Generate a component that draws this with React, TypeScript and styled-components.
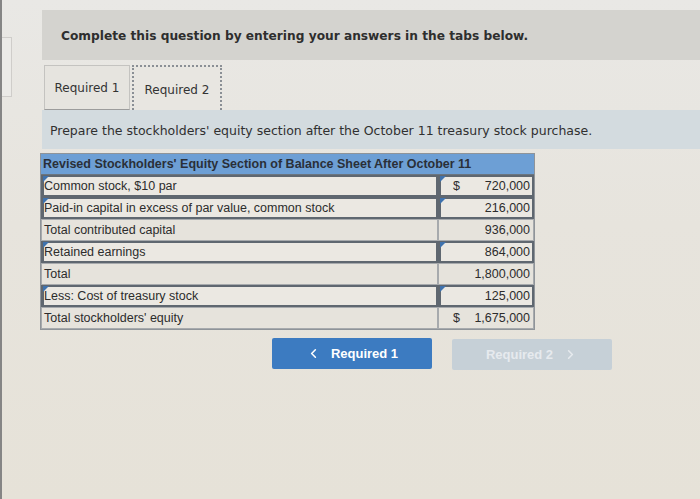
import React from "react";
import styled, { createGlobalStyle } from "styled-components";
import { ChevronLeft, ChevronRight } from "lucide-react";

const Global = createGlobalStyle`
  html, body { margin: 0; padding: 0; }
  body {
    width: 700px;
    height: 499px;
    overflow: hidden;
    background: linear-gradient(180deg, #e9e8e5 0%, #e7e4dd 45%, #e6e2d8 100%);
    font-family: "DejaVu Sans", Verdana, sans-serif;
    color: #2f2f2f;
  }
`;

const Page = styled.div`
  display: flex;
  height: 499px;
`;

const Rail = styled.div`
  width: 12px;
  flex: none;
  border-left: 2px solid #858585;
  padding-top: 37px;
  box-sizing: border-box;
`;

const RailBox = styled.div`
  height: 58px;
  border: 1px solid #cfcdca;
  border-left: none;
  background: #ebeae7;
`;

const Main = styled.div`
  flex: 1;
  padding-left: 30px;
  padding-top: 10px;
  display: flex;
  flex-direction: column;
`;

const Band = styled.div`
  height: 50px;
  background: #d4d3cf;
  display: flex;
  align-items: center;
  padding-left: 19px;
  padding-top: 1px;
  box-sizing: border-box;
  font-weight: bold;
  font-size: 12.2px;
  color: #2e2e2e;
`;

const TabStrip = styled.div`
  margin-top: 5px;
  height: 45px;
  display: flex;
  align-items: stretch;
  gap: 2px;
  padding-left: 2px;
`;

const Tab = styled.div<{ $active?: boolean }>`
  width: ${(p) => (p.$active ? "90px" : "86px")};
  box-sizing: border-box;
  display: flex;
  align-items: center;
  justify-content: center;
  font-size: 12px;
  color: #333;
  background: ${(p) => (p.$active ? "#e8e6e1" : "#e6e4df")};
  border: ${(p) => (p.$active ? "2px dotted #8a8f95" : "1px solid #c4c3c0")};
  border-bottom: ${(p) => (p.$active ? "2px dotted #8a8f95" : "1px solid #9c9c9c")};
  margin-bottom: ${(p) => (p.$active ? "-3px" : "0")};
  padding-top: ${(p) => (p.$active ? "2px" : "0")};
`;

const Panel = styled.div`
  height: 39px;
  background: #d3dbdf;
  display: flex;
  align-items: center;
  padding-left: 8px;
  padding-top: 2px;
  box-sizing: border-box;
  font-size: 12.5px;
  color: #303030;
`;

const Table = styled.div`
  margin-top: 4px;
  margin-left: -2px;
  width: 493px;
  display: grid;
  grid-template-columns: 397px 96px;
  font-family: "Liberation Sans", Arial, sans-serif;
  font-size: 12.5px;
  color: #2c2c2c;
  border: 1px solid #8f9499;
  background: #e7e4dd;
`;

const Head = styled.div`
  grid-column: 1 / span 2;
  height: 20px;
  background: #6d9fd5;
  display: flex;
  align-items: center;
  padding-left: 2px;
  font-weight: bold;
  color: #2a2f38;
  border-bottom: 1px solid #6a7580;
`;

const Cell = styled.div<{ $input?: boolean; $amount?: boolean }>`
  position: relative;
  height: 22px;
  box-sizing: border-box;
  display: flex;
  align-items: center;
  padding: ${(p) => (p.$input ? "0 2px 0 0" : "0 3px 0 2px")};
  justify-content: ${(p) => (p.$amount ? "space-between" : "flex-start")};
  background: ${(p) => (p.$input ? "#ebe8e2" : "#e6e3dc")};
  border: ${(p) => (p.$input ? "2px solid #5f6770" : "1px solid #a7aaad")};
  border-left-width: ${(p) => (p.$input ? "3px" : "1px")};
  &::before {
    content: "";
    display: ${(p) => (p.$input ? "block" : "none")};
    position: absolute;
    left: -1px;
    top: -1px;
    border-top: 6px solid #3f72ad;
    border-right: 6px solid transparent;
  }
`;

const Dollar = styled.span`
  padding-left: 12px;
`;

const Num = styled.span`
  margin-left: auto;
`;

const Buttons = styled.div`
  margin-top: 8px;
  display: flex;
  gap: 20px;
  padding-left: 230px;
`;

const NavButton = styled.div<{ $disabled?: boolean }>`
  width: 160px;
  height: 31px;
  box-sizing: border-box;
  border-radius: 2px;
  display: flex;
  align-items: center;
  justify-content: center;
  gap: 10px;
  font-family: "Liberation Sans", Arial, sans-serif;
  font-weight: bold;
  font-size: 13px;
  background: ${(p) => (p.$disabled ? "#c6d0d7" : "#3c7bc1")};
  color: ${(p) => (p.$disabled ? "#e6eaee" : "#ffffff")};
  margin-top: ${(p) => (p.$disabled ? "1px" : "0")};
`;

type Row = { label: string; input: boolean; dollar?: boolean; value: string };

const rows: Row[] = [
  { label: "Common stock, $10 par", input: true, dollar: true, value: "720,000" },
  { label: "Paid-in capital in excess of par value, common stock", input: true, value: "216,000" },
  { label: "Total contributed capital", input: false, value: "936,000" },
  { label: "Retained earnings", input: true, value: "864,000" },
  { label: "Total", input: false, value: "1,800,000" },
  { label: "Less: Cost of treasury stock", input: true, value: "125,000" },
  { label: "Total stockholders' equity", input: false, dollar: true, value: "1,675,000" },
];

export default function App() {
  return (
    <>
      <Global />
      <Page>
        <Rail>
          <RailBox />
        </Rail>
        <Main>
          <Band>Complete this question by entering your answers in the tabs below.</Band>
          <TabStrip>
            <Tab>Required 1</Tab>
            <Tab $active>Required 2</Tab>
          </TabStrip>
          <Panel>
            Prepare the stockholders' equity section after the October 11 treasury stock purchase.
          </Panel>
          <Table>
            <Head>Revised Stockholders' Equity Section of Balance Sheet After October 11</Head>
            {rows.map((r) => (
              <React.Fragment key={r.label}>
                <Cell $input={r.input}>{r.label}</Cell>
                <Cell $input={r.input} $amount>
                  {r.dollar ? <Dollar>$</Dollar> : null}
                  <Num>{r.value}</Num>
                </Cell>
              </React.Fragment>
            ))}
          </Table>
          <Buttons>
            <NavButton>
              <ChevronLeft size={15} strokeWidth={2.5} />
              Required 1
            </NavButton>
            <NavButton $disabled>
              Required 2
              <ChevronRight size={15} strokeWidth={2.5} />
            </NavButton>
          </Buttons>
        </Main>
      </Page>
    </>
  );
}
